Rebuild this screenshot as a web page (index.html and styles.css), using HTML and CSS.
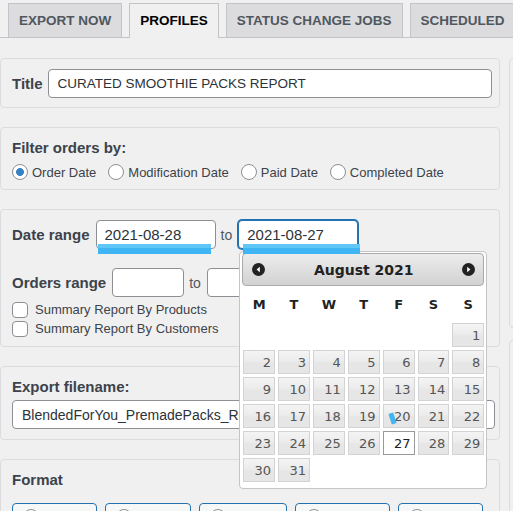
FILE: index.html
```html
<!DOCTYPE html>
<html lang="en">
<head>
  <meta charset="UTF-8" />
  <title>Profiles</title>
  <link rel="stylesheet" href="styles.css">
</head>
<body>
  <div class="page">

    <!-- tabs -->
    <nav class="tabs">
      <a class="tab">EXPORT NOW</a>
      <a class="tab tab-active">PROFILES</a>
      <a class="tab">STATUS CHANGE JOBS</a>
      <a class="tab tab-last">SCHEDULED</a>
    </nav>

    <div class="columns">
      <div class="main">

        <section class="box box-title">
          <label class="label">Title</label>
          <input class="field field-title" type="text" value="CURATED SMOOTHIE PACKS REPORT" />
        </section>

        <section class="box box-filter">
          <h3 class="heading">Filter orders by:</h3>
          <div class="radio-row">
            <label class="radio"><input type="radio" name="filter" checked />Order Date</label>
            <label class="radio"><input type="radio" name="filter" />Modification Date</label>
            <label class="radio"><input type="radio" name="filter" />Paid Date</label>
            <label class="radio"><input type="radio" name="filter" />Completed Date</label>
          </div>
        </section>

        <section class="box box-dates">
          <div class="range-row">
            <span class="label">Date range</span>
            <span class="date-wrap">
              <input class="field field-date" type="text" value="2021-08-28" />
              <span class="mark mark-from"></span>
            </span>
            <span class="to">to</span>
            <span class="date-wrap">
              <input class="field field-date is-focused" type="text" value="2021-08-27" />
              <span class="mark mark-to"></span>

              <!-- datepicker popup -->
              <div class="datepicker">
                <div class="dp-header">
                  <svg class="dp-nav" width="13" height="13" viewBox="0 0 13 13"><circle cx="6.5" cy="6.5" r="6.5" fill="#222"/><polygon points="7.8,3.8 4.6,6.5 7.8,9.2" fill="#fff"/></svg>
                  <span class="dp-title">August 2021</span>
                  <svg class="dp-nav" width="13" height="13" viewBox="0 0 13 13"><circle cx="6.5" cy="6.5" r="6.5" fill="#222"/><polygon points="5.2,3.8 8.4,6.5 5.2,9.2" fill="#fff"/></svg>
                </div>
                <div class="dp-grid dp-weekdays">
                  <span>M</span><span>T</span><span>W</span><span>T</span><span>F</span><span>S</span><span>S</span>
                </div>
                <div class="dp-grid dp-dates">
                  <span></span><span></span><span></span><span></span><span></span><span></span>
                  <a class="dp-day">1</a>
                  <a class="dp-day">2</a><a class="dp-day">3</a><a class="dp-day">4</a><a class="dp-day">5</a><a class="dp-day">6</a><a class="dp-day">7</a><a class="dp-day">8</a>
                  <a class="dp-day">9</a><a class="dp-day">10</a><a class="dp-day">11</a><a class="dp-day">12</a><a class="dp-day">13</a><a class="dp-day">14</a><a class="dp-day">15</a>
                  <a class="dp-day">16</a><a class="dp-day">17</a><a class="dp-day">18</a><a class="dp-day">19</a><a class="dp-day dp-marked">20<span class="tick"></span></a><a class="dp-day">21</a><a class="dp-day">22</a>
                  <a class="dp-day">23</a><a class="dp-day">24</a><a class="dp-day">25</a><a class="dp-day">26</a><a class="dp-day dp-current">27</a><a class="dp-day">28</a><a class="dp-day">29</a>
                  <a class="dp-day">30</a><a class="dp-day">31</a>
                </div>
              </div>
            </span>
          </div>
          <div class="range-row range-orders">
            <span class="label">Orders range</span>
            <input class="field field-num" type="text" />
            <span class="to">to</span>
            <input class="field field-num" type="text" />
          </div>
          <label class="check check-first"><input type="checkbox" />Summary Report By Products</label>
          <label class="check"><input type="checkbox" />Summary Report By Customers</label>
        </section>

        <section class="box box-export">
          <h3 class="heading">Export filename:</h3>
          <input class="field field-file" type="text" value="BlendedForYou_PremadePacks_Report.xlsx" />
        </section>

        <section class="box box-format">
          <h3 class="heading">Format</h3>
          <div class="formats">
            <label class="fmt"><input type="radio" name="fmt" /></label>
            <label class="fmt"><input type="radio" name="fmt" /></label>
            <label class="fmt"><input type="radio" name="fmt" /></label>
            <label class="fmt"><input type="radio" name="fmt" /></label>
            <label class="fmt"><input type="radio" name="fmt" /></label>
          </div>
        </section>

      </div>

      <div class="side">
        <div class="side-box side-box-top"></div>
        <div class="side-box"></div>
      </div>
    </div>

  </div>
</body>
</html>
```

FILE: styles.css
```css
body {
  margin: 0;
  background: #f0f0f1;
  font-family: 'Liberation Sans', Arial, sans-serif;
  font-size: 13px;
  color: #3c434a;
  overflow: hidden;
}

.page {
  width: 900px;
}

/* tabs */
.tabs {
  display: flex;
  align-items: flex-start;
  height: 34px;
  padding: 3px 0 0 8px;
  border-bottom: 1px solid #c3c4c7;
}

.tab {
  box-sizing: border-box;
  height: 34px;
  padding: 0 10px;
  margin-right: 7px;
  border: 1px solid #c3c4c7;
  border-bottom: none;
  background: #dcdcde;
  color: #50575e;
  font-size: 13.5px;
  font-weight: bold;
  line-height: 34px;
  white-space: nowrap;
}

.tab-active {
  height: 35px;
  background: #f0f0f1;
  color: #000;
  position: relative;
}

.tab-last {
  padding-right: 40px;
}

/* layout */
.columns {
  display: flex;
  gap: 9px;
  margin-top: 20px;
}

.main {
  width: 500px;
  flex-shrink: 0;
}

.side {
  width: 300px;
}

.side-box {
  border: 1px solid #dcdcde;
  border-radius: 4px;
  height: 400px;
}

.side-box-top {
  height: 268px;
  margin-bottom: 12px;
}

.box {
  box-sizing: border-box;
  border: 1px solid #dcdcde;
  border-radius: 4px;
  margin-bottom: 19px;
  padding: 11px 7px 10px 11px;
}

.label,
.heading {
  font-size: 15px;
  font-weight: bold;
  color: #3c434a;
  white-space: nowrap;
}

.heading {
  margin: 0;
  line-height: 18px;
}

.field {
  box-sizing: border-box;
  height: 29px;
  border: 1px solid #8c8f94;
  border-radius: 4px;
  background: #fff;
  padding: 0 9px;
  font-family: inherit;
  font-size: 14px;
  color: #2c3338;
  outline: none;
}

.is-focused {
  border-color: #2271b1;
  box-shadow: 0 0 0 1px #2271b1;
}

/* title */
.box-title {
  display: flex;
  align-items: center;
  gap: 5px;
  padding: 10px 7px 9px 11px;
}

.field-title {
  flex: 1;
  font-size: 13.5px;
}

/* filter */
.box-filter {
  padding-bottom: 7px;
}

.radio-row {
  display: flex;
  margin-top: 5px;
  height: 20px;
  align-items: center;
}

.radio {
  display: flex;
  align-items: center;
  gap: 4px;
  margin-right: 12px;
  font-size: 13px;
}

input[type="radio"],
input[type="checkbox"] {
  appearance: none;
  -webkit-appearance: none;
  box-sizing: border-box;
  width: 16px;
  height: 16px;
  margin: 0;
  border: 1px solid #8c8f94;
  background: #fff;
  flex-shrink: 0;
}

input[type="radio"] {
  border-radius: 50%;
}

input[type="radio"]:checked {
  background: radial-gradient(circle, #3582c4 0 3.6px, #fff 4.2px);
}

input[type="checkbox"] {
  border-radius: 4px;
}

/* date / orders range */
.box-dates {
  padding: 10px 7px 8px 11px;
}

.range-row {
  display: flex;
  align-items: center;
  gap: 6px;
}

.range-orders {
  margin-top: 19px;
}

.to {
  font-size: 14px;
  color: #50575e;
  margin: 0 0 0 -1px;
}

.date-wrap {
  position: relative;
  display: flex;
}

.field-date {
  width: 120px;
  font-size: 15px;
  padding: 0 8px;
}

.field-num {
  width: 72px;
}

.mark {
  position: absolute;
  top: 24px;
  height: 10px;
  background: linear-gradient(#5ec7f8 0 40%, #3fb6f3 40%);
  z-index: 20;
}

.mark-from {
  left: 2px;
  width: 113px;
}

.mark-to {
  left: 5px;
  width: 117px;
}

.check {
  display: flex;
  align-items: center;
  gap: 7px;
  height: 19px;
  font-size: 13px;
}

.check-first {
  margin-top: 3px;
}

/* datepicker */
.datepicker {
  position: absolute;
  top: 31px;
  left: 1px;
  z-index: 10;
  box-sizing: border-box;
  width: 248px;
  padding: 1px 2px 6px;
  background: #fff;
  border: 1px solid #c5c5c5;
  border-radius: 4px;
  font-family: 'DejaVu Sans', Verdana, sans-serif;
}

.dp-header {
  display: flex;
  align-items: center;
  justify-content: space-between;
  height: 33px;
  box-sizing: border-box;
  padding: 0 8px 0 9px;
  border: 1px solid #aaa;
  border-radius: 4px;
  background: linear-gradient(#ececec, #d2d2d2);
}

.dp-title {
  font-size: 14px;
  font-weight: bold;
  color: #222;
}

.dp-grid {
  display: grid;
  grid-template-columns: repeat(7, 1fr);
  column-gap: 3px;
  margin: 0 0 0 1px;
}

.dp-weekdays {
  height: 37px;
  align-items: center;
  text-align: center;
  font-size: 13px;
  font-weight: bold;
  color: #222;
}

.dp-dates {
  row-gap: 3px;
}

.dp-day {
  position: relative;
  box-sizing: border-box;
  height: 24px;
  line-height: 23px;
  padding-right: 3px;
  text-align: right;
  font-size: 13px;
  color: #555;
  border: 1px solid #d3d3d3;
  background: linear-gradient(#f4f4f4 0, #ececec 45%, #e6e6e6 55%, #e6e6e6 100%);
}

.dp-current {
  background: #fff;
  border-color: #999;
  color: #212121;
}

.tick {
  position: absolute;
  left: 6px;
  top: 8px;
  width: 5px;
  height: 11px;
  background: #3fb6f3;
  transform: rotate(-18deg);
}

/* export */
.box-export {
  padding-bottom: 10px;
}

.field-file {
  width: 483px;
  margin-top: 4px;
  font-size: 14px;
}

/* format */
.box-format {
  height: 120px;
}

.formats {
  display: grid;
  grid-template-columns: 85px 86px 88px 95px 85px;
  gap: 8px;
  margin-top: 14px;
}

.fmt {
  display: flex;
  flex-direction: column;
  gap: 6px;
  height: 60px;
  box-sizing: border-box;
  padding: 5px 10px;
  border: 1px solid #2271b1;
  border-radius: 4px;
  background: #f6f7f7;
  font-size: 13px;
}
```
